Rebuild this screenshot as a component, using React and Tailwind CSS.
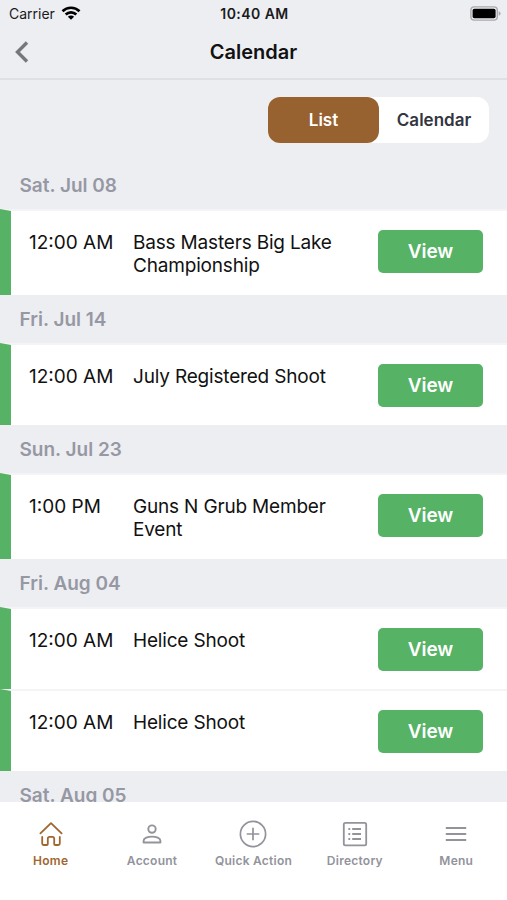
import clsx from 'clsx';

/* ── Events grouped by day ───────────────────────────────── */
const days = [
    { date: 'Sat. Jul 08', events: [{ time: '12:00 AM', title: 'Bass Masters Big Lake Championship' }] },
    { date: 'Fri. Jul 14', events: [{ time: '12:00 AM', title: 'July Registered Shoot' }] },
    { date: 'Sun. Jul 23', events: [{ time: '1:00 PM', title: 'Guns N Grub Member Event' }] },
    {
        date: 'Fri. Aug 04',
        events: [
            { time: '12:00 AM', title: 'Helice Shoot' },
            { time: '12:00 AM', title: 'Helice Shoot' },
        ],
    },
    { date: 'Sat. Aug 05', events: [] },
];

const HomeIcon = () => (
    <svg viewBox="0 0 28 28" className="size-7" fill="none" stroke="currentColor" strokeWidth="1.8" strokeLinecap="round" strokeLinejoin="round">
        <path d="M3.4 13.4 14 3.2l10.6 10.2" />
        <path d="M5.2 16.9v6.6c0 .9.6 1.5 1.5 1.5h3.1c.7 0 1-.4 1-1v-5.3c0-1.2.7-1.9 1.8-1.9h2.8c1.1 0 1.8.7 1.8 1.9V24c0 .6.3 1 1 1h3.1c.9 0 1.5-.6 1.5-1.5v-6.6" />
    </svg>
);

const AccountIcon = () => (
    <svg viewBox="0 0 28 28" className="size-7" fill="none" stroke="currentColor" strokeWidth="1.9" strokeLinejoin="round">
        <circle cx="14" cy="9.1" r="3.7" />
        <path d="M5.6 22.5v-1.7c0-2.6 4.2-4.2 8.4-4.2s8.4 1.6 8.4 4.2v1.7z" />
    </svg>
);

const QuickActionIcon = () => (
    <svg viewBox="0 0 28 28" className="size-7" fill="none" stroke="currentColor" strokeWidth="1.7">
        <circle cx="14" cy="14" r="12.6" />
        <path d="M14 7.7v12.6M7.7 14h12.6" />
    </svg>
);

const DirectoryIcon = () => (
    <svg viewBox="0 0 28 28" className="size-7" fill="none" stroke="currentColor" strokeWidth="1.8">
        <rect x="2.8" y="2.9" width="22.4" height="22.4" rx="1.6" />
        <path d="M11.2 9h8.8M11.2 14h8.8M11.2 19h8.8M7.4 9h1.8M7.4 14h1.8M7.4 19h1.8" />
    </svg>
);

const MenuIcon = () => (
    <svg viewBox="0 0 28 28" className="size-7" fill="none" stroke="currentColor" strokeWidth="2">
        <path d="M3.8 8.1h20.4M3.8 14h20.4M3.8 19.9h20.4" />
    </svg>
);

const tabs = [
    { label: 'Home', Icon: HomeIcon, active: true },
    { label: 'Account', Icon: AccountIcon },
    { label: 'Quick Action', Icon: QuickActionIcon },
    { label: 'Directory', Icon: DirectoryIcon },
    { label: 'Menu', Icon: MenuIcon },
];

const StatusBar = () => (
    <div className="grid h-7 grid-cols-3 items-center pl-[9px] pr-[6px] text-[14px] text-[#1a1a1c]">
        <div className="mb-[2px] flex items-center gap-[6px]">
            <span>Carrier</span>
            <svg viewBox="0 0 20 14" className="h-[14px] w-5" fill="none" stroke="#000" strokeWidth="2.7">
                <path d="M1.5 5.2a12.2 12.2 0 0 1 17 0" />
                <path d="M4.7 8.5a7.6 7.6 0 0 1 10.6 0" />
                <path d="M10 13.8 6.9 10.7a4.4 4.4 0 0 1 6.2 0z" fill="#000" stroke="none" />
            </svg>
        </div>
        <span className="mb-[2px] -ml-[1px] text-center font-semibold tracking-[0.45px]">10:40 AM</span>
        <svg viewBox="0 0 31 15" className="mb-[2px] h-[15px] w-[31px] justify-self-end">
            <rect x=".9" y=".9" width="26.4" height="13.2" rx="3.4" fill="none" stroke="#a9a9ac" strokeWidth="1.4" />
            <rect x="2.6" y="2.7" width="23" height="9.6" rx="1.8" fill="#000" />
            <path d="M28.7 5.2c1.3.5 1.9 1.3 1.9 2.3s-.6 1.8-1.9 2.3z" fill="#a9a9ac" />
        </svg>
    </div>
);

const EventRow = ({ time, title }) => (
    <div className="flex items-start border-l-[11px] border-t-2 border-l-[#56b265] border-t-[#f4f4f6] bg-white pb-[18px] pl-[18px] pr-[24px] pt-[19px]">
        <span className="w-[104px] shrink-0 pt-[1px] text-[19px] leading-[23px]">{time}</span>
        <span className="min-h-[43px] w-[220px] pt-[1px] text-[19px] leading-[23px] tracking-[-0.18px]">{title}</span>
        <button className="ml-auto h-[43px] w-[105px] rounded-[5px] bg-[#56b265] pt-[2px] text-[19px] font-semibold tracking-[-0.1px] text-white">
            View
        </button>
    </div>
);

const App = () => {
    return (
        <div className="flex h-[900px] w-[507px] flex-col overflow-hidden bg-[#edeef2] font-[Inter,'Liberation_Sans',sans-serif] text-[#111]">
            <StatusBar />

            <header className="grid h-[52px] grid-cols-3 items-center border-b-2 border-[#dfe0e3] px-[15px]">
                <svg viewBox="0 0 14 22" className="mb-[2px] h-[22px] w-[14px]" fill="none" stroke="#77777a" strokeWidth="3.4">
                    <path d="M12 1.5 2.5 11l9.5 9.5" />
                </svg>
                <h1 className="mb-[2px] text-center text-[20px] font-semibold">Calendar</h1>
            </header>

            <main className="min-h-0 flex-1 overflow-hidden">
                {/* View switch */}
                <div className="flex justify-end pb-[18px] pr-[18px] pt-[17px]">
                    <div className="flex h-[46px] w-[221px] rounded-[12px] bg-white text-[17px] font-semibold">
                        <button className="w-[111px] rounded-[12px] bg-[#97622f] pt-[1px] text-white">List</button>
                        <button className="flex-1 pt-[1px] text-[#33363f]">Calendar</button>
                    </div>
                </div>

                {days.map((day) => (
                    <section key={day.date}>
                        <h2 className="flex h-12 items-center pl-[19.5px] pt-[3px] text-[19px] font-semibold text-[#9698a3]">
                            {day.date}
                        </h2>
                        {day.events.map((event, i) => (
                            <EventRow key={i} {...event} />
                        ))}
                    </section>
                ))}
            </main>

            <nav className="grid h-[98px] grid-cols-5 bg-white pt-[18px]">
                {tabs.map(({ label, Icon, active }) => (
                    <a
                        key={label}
                        className={clsx(
                            'flex flex-col items-center gap-[4px] whitespace-nowrap text-[12px] font-semibold tracking-[0.25px]',
                            active ? 'text-[#a0662f]' : 'text-[#92939b]'
                        )}
                    >
                        <Icon />
                        <span>{label}</span>
                    </a>
                ))}
            </nav>
        </div>
    );
};

export default App;
